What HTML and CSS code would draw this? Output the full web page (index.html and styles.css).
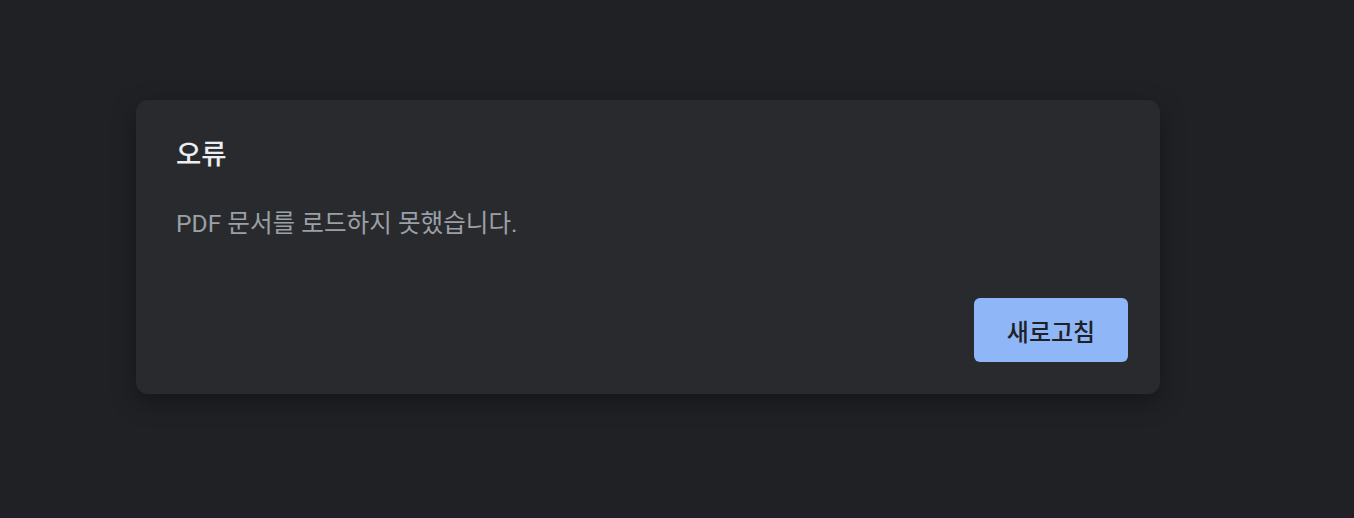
FILE: index.html
```html
<!DOCTYPE html>
<html lang="ko">
<head>
    <meta charset="UTF-8">
    <meta name="viewport" content="width=device-width, initial-scale=1.0">
    <title>오류</title>
    <link rel="stylesheet" href="styles.css">
</head>
<body>
    <div class="dialog">
        <h2 class="dialog-title">오류</h2>
        <p class="dialog-message">PDF 문서를 로드하지 못했습니다.</p>
        <div class="dialog-actions">
            <button class="btn-reload">새로고침</button>
        </div>
    </div>
</body>
</html>
```

FILE: styles.css
```css
body {
    margin: 0;
    background-color: #202124;
    font-family: Roboto, "Noto Sans CJK KR", sans-serif;
    height: 518px;
    padding: 100px 0 0 136px;
    box-sizing: border-box;
}
.dialog {
    width: 1024px;
    height: 294px;
    box-sizing: border-box;
    background: #292a2e;
    border-radius: 12px;
    box-shadow: 0 8px 24px rgba(0, 0, 0, 0.35);
    padding: 37px 32px 32px 40px;
    display: flex;
    flex-direction: column;
}
.dialog-title {
    margin: 0;
    font-size: 27.5px;
    font-weight: 500;
    color: #eceef1;
    line-height: 36px;
}
.dialog-message {
    margin: 35px 0 0;
    font-size: 24.6px;
    color: #9aa0a6;
    line-height: 32px;
}
.dialog-actions {
    margin-top: auto;
    display: flex;
    justify-content: flex-end;
}
.btn-reload {
    width: 154px;
    height: 64px;
    border: none;
    border-radius: 6px;
    background-color: #8fb6f6;
    color: #202124;
    font-family: Roboto, "Noto Sans CJK KR", sans-serif;
    font-size: 24px;
    font-weight: 500;
    cursor: pointer;
}
```
